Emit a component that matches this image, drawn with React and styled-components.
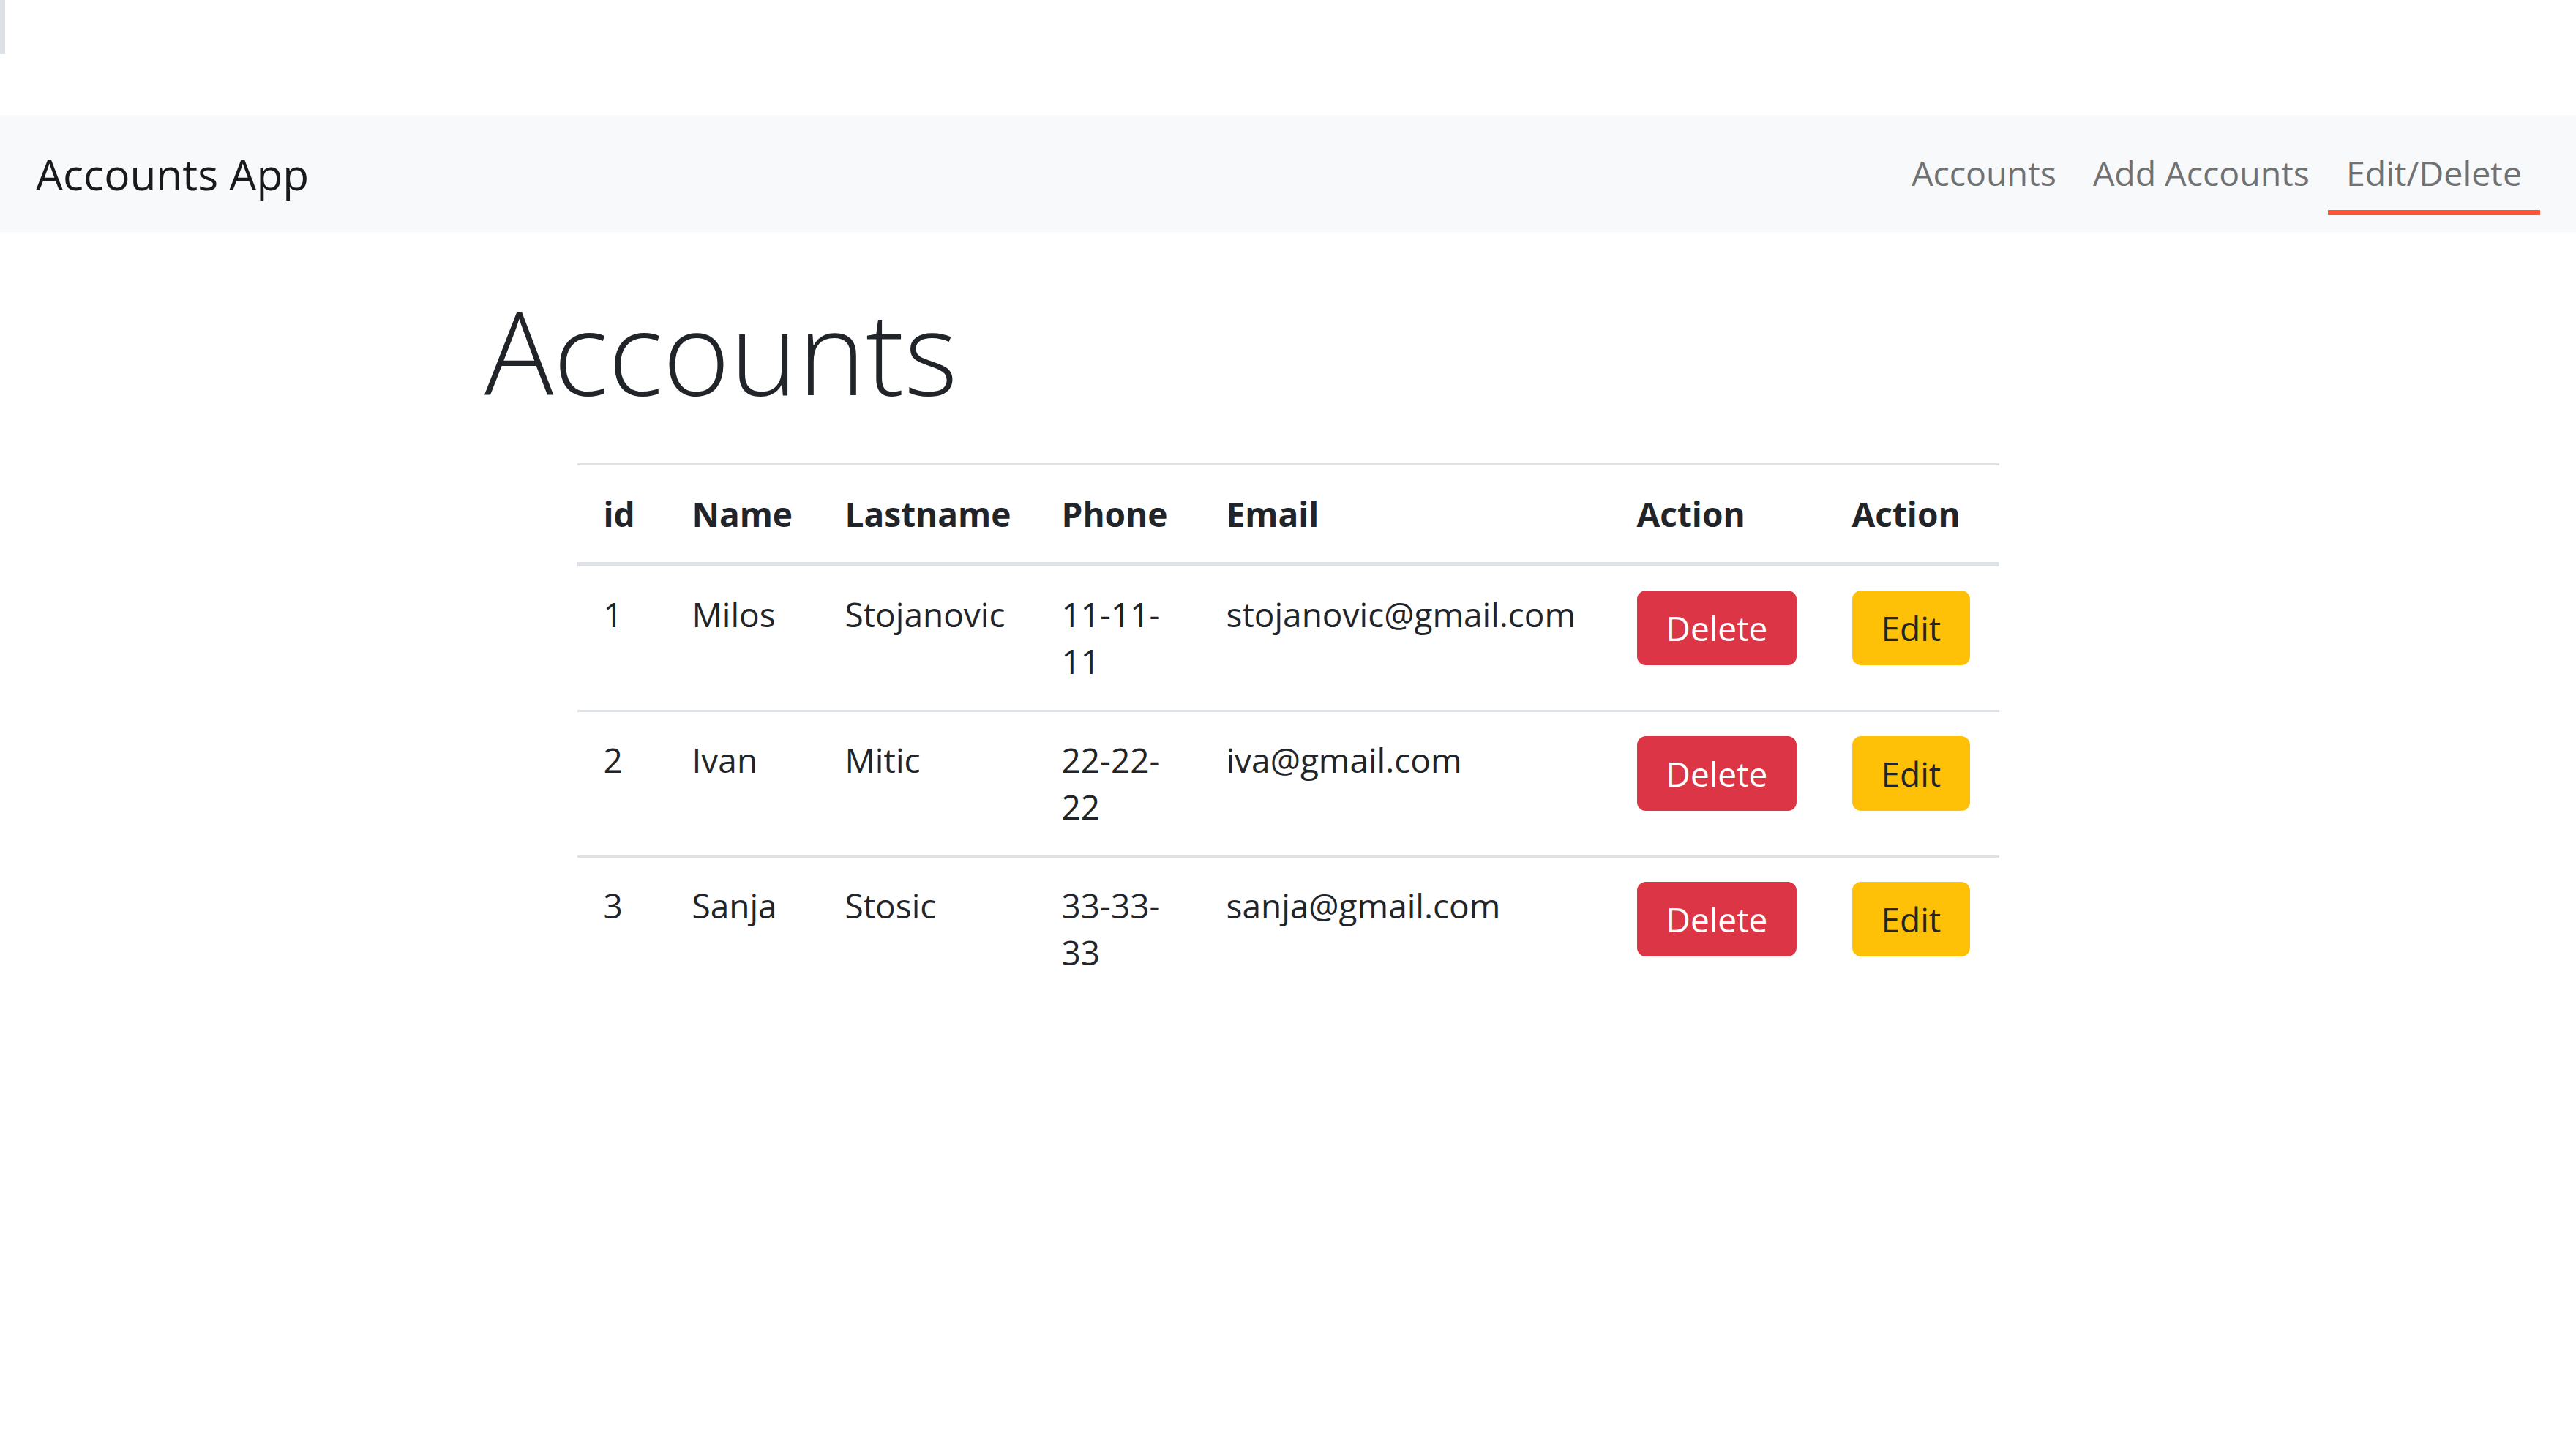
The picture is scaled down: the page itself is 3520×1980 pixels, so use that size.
import React from "react";
import styled, { createGlobalStyle } from "styled-components";

const GlobalStyle = createGlobalStyle`
  html, body {
    margin: 0;
    padding: 0;
    background: #ffffff;
  }
  body {
    font-family: "Open Sans", "Noto Sans", "DejaVu Sans", sans-serif;
    color: #212529;
  }
`;

const Page = styled.div`
  min-height: 1980px;
  background: #ffffff;
`;

const TopStrip = styled.div`
  height: 157px;
  display: flex;
  align-items: flex-start;
`;

const ScrollMark = styled.div`
  width: 7px;
  height: 74px;
  background: #dcdfe3;
`;

const Navbar = styled.nav`
  height: 160px;
  box-sizing: border-box;
  background: #f8f9fa;
  display: flex;
  align-items: center;
  justify-content: space-between;
  padding: 0 49px;
`;

const Brand = styled.a`
  font-size: 58.6px;
  line-height: 80px;
  color: #1a1a1a;
  text-decoration: none;
  white-space: nowrap;
`;

const NavList = styled.ul`
  list-style: none;
  margin: 0;
  padding: 0 0 23px;
  align-self: flex-end;
  display: flex;
  align-items: flex-end;
`;

const NavLink = styled.li`
  font-size: 46.5px;
  line-height: 64px;
  padding: 19px 25px 19px;
  color: #707172;
  border-bottom: 7px solid ${(p) => (p.$active ? "#fc5634" : "transparent")};
  white-space: nowrap;
`;

const Main = styled.main`
  width: 2196px;
  margin: 0 auto;
`;

const Title = styled.h1`
  font-size: 157px;
  font-weight: 300;
  line-height: 1.2;
  margin: 68px 0 60px;
  color: #212529;
`;

const Table = styled.table`
  width: 1943px;
  margin: 0 auto;
  border-collapse: collapse;
  table-layout: fixed;
  font-size: 46px;
  line-height: 64px;
  color: #212529;
`;

const HeadCell = styled.th`
  text-align: left;
  font-weight: 700;
  padding: 34px 36px;
  border-top: 3px solid #dee2e6;
  border-bottom: 6px solid #dee2e6;
  vertical-align: bottom;
`;

const Cell = styled.td`
  padding: 33px 36px 35px;
  border-top: 3px solid #dee2e6;
  vertical-align: top;
`;

const Button = styled.button`
  display: inline-block;
  font-family: inherit;
  font-size: 46px;
  line-height: 64px;
  padding: 16px 37px;
  border-radius: 12px;
  border: 3px solid ${(p) => (p.$variant === "danger" ? "#dc3545" : "#ffc107")};
  background: ${(p) => (p.$variant === "danger" ? "#dc3545" : "#ffc107")};
  color: ${(p) => (p.$variant === "danger" ? "#ffffff" : "#212529")};
  cursor: pointer;
`;

const columns = [121, 209, 296, 225, 561, 294, 237];
const headers = ["id", "Name", "Lastname", "Phone", "Email", "Action", "Action"];

const accounts = [
  { id: 1, name: "Milos", lastname: "Stojanovic", phone: "11-11-11", email: "stojanovic@gmail.com" },
  { id: 2, name: "Ivan", lastname: "Mitic", phone: "22-22-22", email: "iva@gmail.com" },
  { id: 3, name: "Sanja", lastname: "Stosic", phone: "33-33-33", email: "sanja@gmail.com" },
];

export default function App() {
  return (
    <Page>
      <GlobalStyle />
      <TopStrip>
        <ScrollMark />
      </TopStrip>
      <Navbar>
        <Brand href="#">Accounts App</Brand>
        <NavList>
          <NavLink>Accounts</NavLink>
          <NavLink>Add Accounts</NavLink>
          <NavLink $active>Edit/Delete</NavLink>
        </NavList>
      </Navbar>
      <Main>
        <Title>Accounts</Title>
        <Table>
          <colgroup>
            {columns.map((w, i) => (
              <col key={i} style={{ width: w }} />
            ))}
          </colgroup>
          <thead>
            <tr>
              {headers.map((h, i) => (
                <HeadCell key={i}>{h}</HeadCell>
              ))}
            </tr>
          </thead>
          <tbody>
            {accounts.map((a) => (
              <tr key={a.id}>
                <Cell>{a.id}</Cell>
                <Cell>{a.name}</Cell>
                <Cell>{a.lastname}</Cell>
                <Cell>{a.phone}</Cell>
                <Cell>{a.email}</Cell>
                <Cell>
                  <Button $variant="danger">Delete</Button>
                </Cell>
                <Cell>
                  <Button $variant="warning">Edit</Button>
                </Cell>
              </tr>
            ))}
          </tbody>
        </Table>
      </Main>
    </Page>
  );
}
